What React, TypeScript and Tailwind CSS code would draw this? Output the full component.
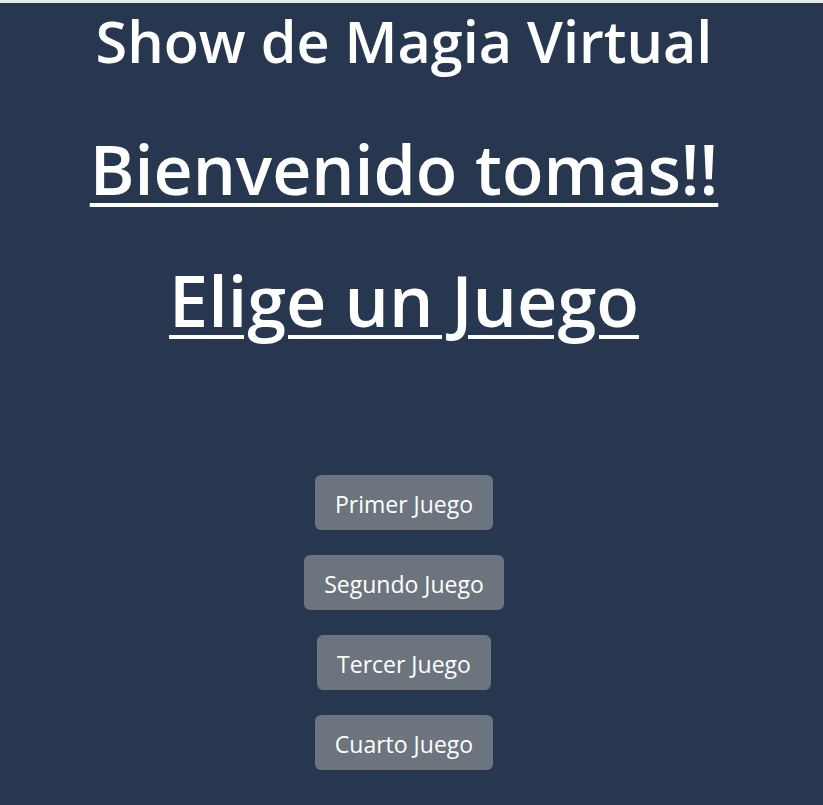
export default function App() {
  const juegos = ["Primer Juego", "Segundo Juego", "Tercer Juego", "Cuarto Juego"];

  return (
    <div
      className="min-h-[805px] bg-[#283750] text-white border-t-[3px] border-[#e4e6e8] pr-[15px]"
      style={{ fontFamily: '"Open Sans", "Noto Sans", sans-serif' }}
    >
      <div className="flex flex-col items-center">
        <h1 className="text-[57.5px] leading-[70px] mt-[3px] font-semibold">Show de Magia Virtual</h1>
        <h2 className="text-[68px] leading-[80px] mt-[53px] font-semibold underline decoration-[4px] underline-offset-[8px]">
          Bienvenido tomas!!
        </h2>
        <h2 className="text-[70px] leading-[80px] mt-[51px] font-semibold underline decoration-[4px] underline-offset-[8px]">
          Elige un Juego
        </h2>
        <div className="flex flex-col items-center gap-[25px] mt-[135px]">
          {juegos.map((j) => (
            <button
              key={j}
              className="h-[55px] px-[20px] pt-[3px] rounded-md bg-[#6c757d] text-white text-[23px]"
            >
              {j}
            </button>
          ))}
        </div>
      </div>
    </div>
  );
}
